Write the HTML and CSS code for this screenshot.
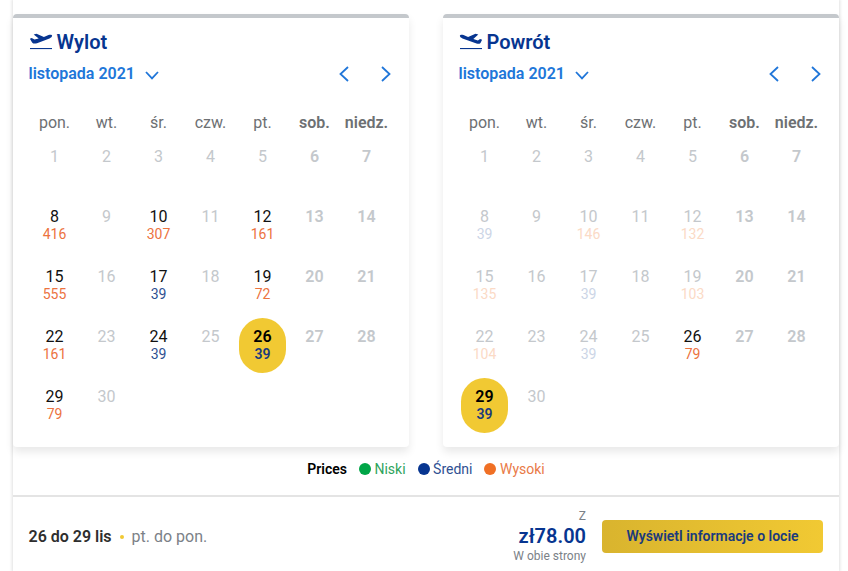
FILE: index.html
```html
<!DOCTYPE html>
<html lang="pl">

<head>
  <meta charset="UTF-8">
  <meta name="viewport" content="width=device-width, initial-scale=1.0">
  <title>Wybierz daty</title>
  <link rel="stylesheet" href="styles.css">
</head>

<body>
  <main class="panel">
    <div class="calendars">
      <section class="calendar">
        <h2>
          <svg class="plane" viewBox="0.5 0 24 18">
            <path d="M1.4 5.8 L3.2 5.1 L6 6.6 L10.2 5.5 L5.2 1.5 L8 .7 L15.4 3.9 L20 2.1 C21.8 1.5 23.4 1.6 23.6 2.5 C23.8 3.7 22.4 4.8 21 5.4 L8.5 10.2 C6.5 10.9 4.6 10.6 3.6 9.4 Z" />
            <path d="M1.5 15h22v1.1h-22z" />
          </svg>
          Wylot
        </h2>
        <div class="month-bar">
          <button class="month">listopada 2021
            <svg class="chevron-down" viewBox="0 0 14 9"><path d="M1 1l6 6.4L13 1" /></svg>
          </button>
          <div class="arrows">
            <button><svg viewBox="0 0 10 16"><path d="M9 1L1.5 8L9 15" /></svg></button>
            <button><svg viewBox="0 0 10 16"><path d="M1 1l7.5 7L1 15" /></svg></button>
          </div>
        </div>
        <div class="grid" id="outbound"></div>
      </section>

      <section class="calendar">
        <h2>
          <svg class="plane" viewBox="0.5 0 24 18">
            <path d="M1.4 2.5 C1.7 1.6 3.4 1.5 5 2.1 L9.6 3.9 L17 .7 L19.8 1.5 L14.8 5.9 L19.4 7.4 L21.6 6.1 L23.6 6.7 L22 9.9 C21 11 19.6 11 18 10.4 L4 5.4 C2.4 4.8 1.1 3.7 1.4 2.5 Z" />
            <path d="M1.5 15h22v1.1h-22z" />
          </svg>
          Powrót
        </h2>
        <div class="month-bar">
          <button class="month">listopada 2021
            <svg class="chevron-down" viewBox="0 0 14 9"><path d="M1 1l6 6.4L13 1" /></svg>
          </button>
          <div class="arrows">
            <button><svg viewBox="0 0 10 16"><path d="M9 1L1.5 8L9 15" /></svg></button>
            <button><svg viewBox="0 0 10 16"><path d="M1 1l7.5 7L1 15" /></svg></button>
          </div>
        </div>
        <div class="grid" id="inbound"></div>
      </section>
    </div>

    <div class="legend">
      <strong>Prices</strong>
      <span class="key low">Niski</span>
      <span class="key medium">Średni</span>
      <span class="key high">Wysoki</span>
    </div>

    <footer>
      <p class="dates"><strong>26 do 29 lis</strong><i></i>pt. do pon.</p>
      <div class="total">
        <span>Z</span>
        <strong>zł78.00</strong>
        <span>W obie strony</span>
      </div>
      <button class="submit">Wyświetl informacje o locie</button>
    </footer>
  </main>

  <script src="script.js"></script>
</body>

</html>
```

FILE: styles.css
```css
* {
  margin: 0;
  padding: 0;
  box-sizing: border-box;
}

body {
  font-family: Roboto, "Liberation Sans", sans-serif;
  background-color: #fff;
  overflow: hidden;
}

button {
  border: none;
  background: none;
  font: inherit;
  color: inherit;
  cursor: pointer;
}

.panel {
  width: 826px;
  height: 571px;
  margin-left: 13px;
  padding-top: 14px;
  box-shadow: 0 0 3px 1px rgba(0, 0, 0, 0.12);
}

.calendars {
  display: flex;
  justify-content: space-between;
}

.calendar {
  width: 396px;
  height: 433px;
  padding: 12px 16px 0 15.5px;
  border-top: 4px solid #c4c8cc;
  border-radius: 4px;
  box-shadow: 0 5px 9px rgba(0, 0, 0, 0.09);
}

.calendar h2 {
  display: flex;
  align-items: center;
  gap: 4px;
  height: 24px;
  font-size: 20px;
  font-weight: 600;
  color: #073590;
}

.plane {
  width: 24px;
  height: 18px;
  fill: #073590;
}

.month-bar {
  display: flex;
  justify-content: space-between;
  align-items: center;
  height: 24px;
  margin-top: 8px;
  color: #2076d9;
}

.month {
  display: flex;
  align-items: center;
  gap: 10px;
  font-size: 16px;
  font-weight: 600;
  line-height: 18px;
}

.month-bar svg {
  display: block;
  width: 10px;
  height: 16px;
  fill: none;
  stroke: #2076d9;
  stroke-width: 1.8;
}

.month-bar .chevron-down {
  width: 14px;
  height: 9px;
  margin-top: 2px;
}

.arrows {
  display: flex;
  gap: 32px;
  padding-right: 2.5px;
}

.grid {
  display: grid;
  grid-template-columns: repeat(7, 52px);
  grid-template-rows: 31px repeat(5, 60px);
  margin-top: 21px;
  text-align: center;
  font-size: 16px;
}

.weekday {
  line-height: 32px;
  color: #6d7073;
}

.day {
  justify-self: center;
  width: 47px;
  height: 55px;
  padding-top: 9px;
  line-height: 20px;
  color: #c4c8cc;
}

.day .price {
  display: block;
  font-size: 14px;
  line-height: 14px;
}

.weekend {
  font-weight: 600;
}

.active {
  color: #111;
}

.price.high {
  color: #ec733f;
}

.price.medium {
  color: #2f5092;
}

.faded .price.high {
  color: #fbdac6;
}

.faded .price.medium {
  color: #ccd5e6;
}

.selected {
  border-radius: 24px;
  background-color: #f1c933;
  color: #000;
  font-weight: 600;
}

.selected .price.medium {
  color: #1b3a7d;
}

.legend {
  display: flex;
  justify-content: center;
  align-items: center;
  gap: 12px;
  height: 48px;
  padding-bottom: 4px;
  font-size: 14px;
}

.legend strong {
  font-weight: 600;
}

.key {
  display: flex;
  align-items: center;
  gap: 3.5px;
}

.key::before {
  content: "";
  width: 12px;
  height: 12px;
  border-radius: 50%;
  margin-top: -1px;
}

.key.low {
  color: #2fa45c;
}

.key.low::before {
  background-color: #00a547;
}

.key.medium {
  color: #2f5092;
}

.key.medium::before {
  background-color: #073590;
}

.key.high {
  color: #e97a47;
}

.key.high::before {
  background-color: #f07025;
}

footer {
  display: flex;
  align-items: center;
  height: 81px;
  padding: 0 16px 0 15.5px;
  border-top: 2px solid #e4e4e4;
}

.dates {
  display: flex;
  align-items: center;
  margin-right: auto;
  font-size: 16px;
  color: #7b8187;
}

.dates strong {
  font-weight: 600;
  color: #2e2e2e;
}

.dates i {
  width: 4px;
  height: 4px;
  margin: 0 8px;
  border-radius: 50%;
  background-color: #f1c933;
}

.total {
  display: flex;
  flex-direction: column;
  align-items: flex-end;
  margin: -2px 16px 0 0;
  font-size: 12px;
  line-height: 16px;
  color: #7b8187;
}

.total strong {
  font-size: 20px;
  font-weight: 600;
  line-height: 24px;
  color: #073590;
}

.submit {
  width: 221px;
  height: 33px;
  padding-bottom: 1px;
  border-radius: 4px;
  background: linear-gradient(90deg, #d9b42e, #f1c933);
  font-size: 14px;
  font-weight: 600;
  color: #1b3a7d;
}
```

FILE: script.js
```js
const weekdays = ['pon.', 'wt.', 'śr.', 'czw.', 'pt.', 'sob.', 'niedz.'];

// Prices per day of the month
const outbound = {
  prices: { 8: 416, 10: 307, 12: 161, 15: 555, 17: 39, 19: 72, 22: 161, 24: 39, 26: 39, 29: 79 },
  firstDay: 1,
  selected: 26
};

const inbound = {
  prices: { 8: 39, 10: 146, 12: 132, 15: 135, 17: 39, 19: 103, 22: 104, 24: 39, 26: 79, 29: 39 },
  firstDay: 26,
  selected: 29
};

function renderCalendar(id, data) {
  const grid = document.getElementById(id);

  weekdays.forEach((name, i) => {
    grid.innerHTML += `<span class="weekday ${i > 4 ? 'weekend' : ''}">${name}</span>`;
  });

  for (let day = 1; day <= 30; day++) {
    const price = data.prices[day];
    const classes = ['day'];

    if ((day - 1) % 7 > 4) classes.push('weekend');
    if (price) classes.push(day >= data.firstDay ? 'active' : 'faded');
    if (day === data.selected) classes.push('selected');

    const level = price > 50 ? 'high' : 'medium';
    const priceHtml = price ? `<span class="price ${level}">${price}</span>` : '';
    grid.innerHTML += `<div class="${classes.join(' ')}">${day}${priceHtml}</div>`;
  }
}

renderCalendar('outbound', outbound);
renderCalendar('inbound', inbound);
```
